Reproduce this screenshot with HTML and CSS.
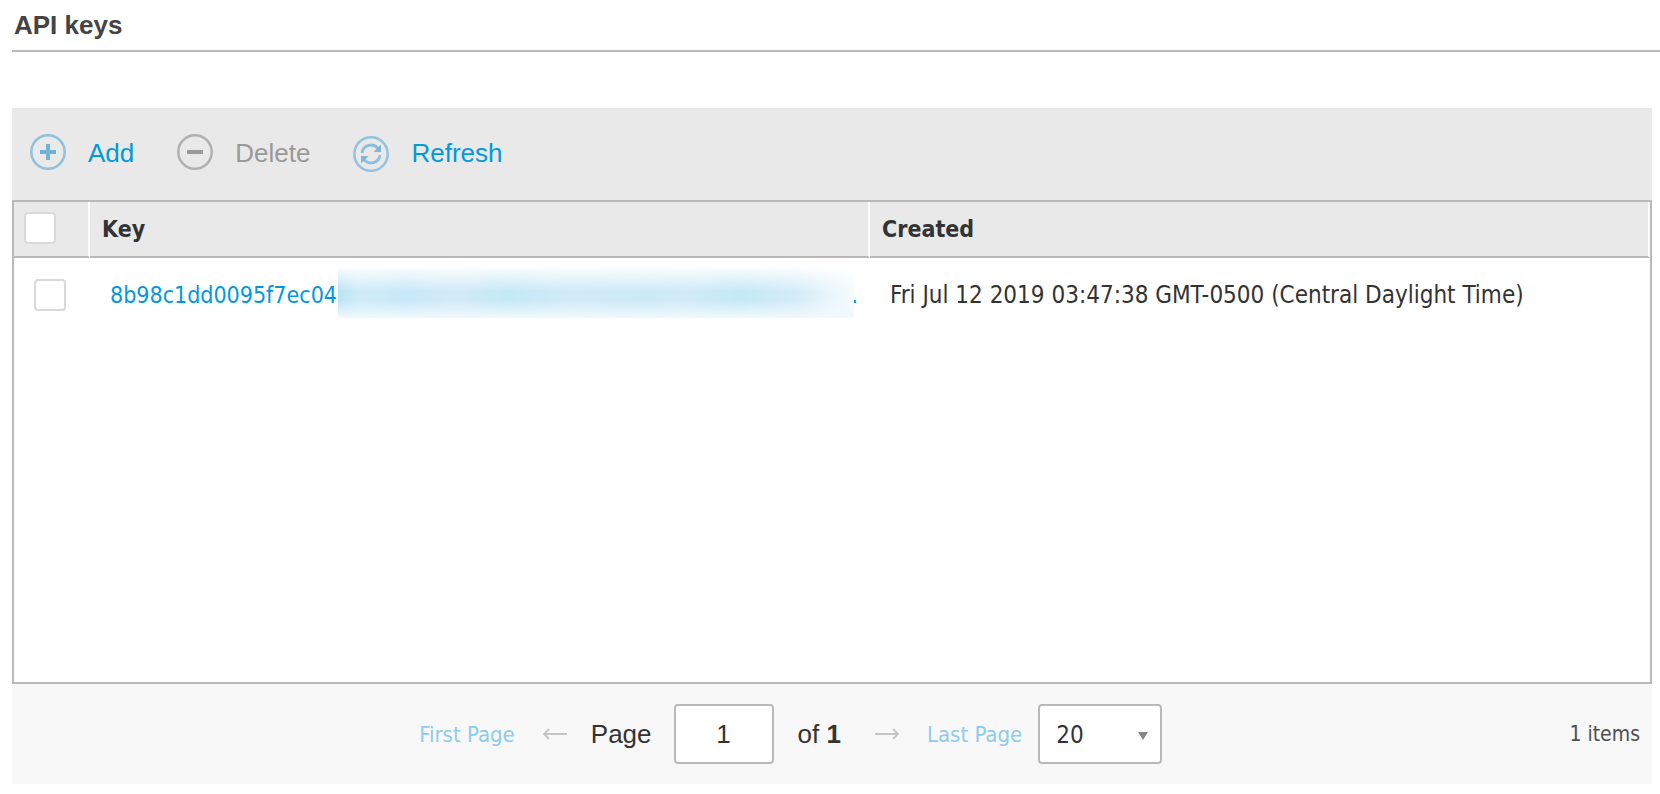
FILE: index.html
```html
<!DOCTYPE html>
<html lang="en">
<head>
  <meta charset="utf-8">
  <title>API keys</title>
  <link rel="stylesheet" href="styles.css">
</head>
<body>
<h1 class="page-title">API keys</h1>

<div class="grid">
  <div class="toolbar">
    <button class="tool-btn" type="button">
      <svg class="tool-icon" viewBox="0 0 36 36" fill="none">
        <circle cx="18" cy="18" r="16.700" stroke="#8fc1de" stroke-width="2.500"/>
        <path d="M10 18H26M18 10V26" stroke="#70b1d8" stroke-width="4"/>
      </svg>
      Add
    </button>
    <button class="tool-btn" type="button" disabled>
      <svg class="tool-icon" viewBox="0 0 36 36" fill="none">
        <circle cx="18" cy="18" r="16.700" stroke="#b0b0b0" stroke-width="2.500"/>
        <path d="M10 18H26" stroke="#9a9a9a" stroke-width="4"/>
      </svg>
      Delete
    </button>
    <button class="tool-btn" type="button">
      <svg class="tool-icon tool-icon-refresh" viewBox="0 0 36 36" fill="none">
        <circle cx="18" cy="18" r="16.700" stroke="#93c3de" stroke-width="2.500"/>
        <path d="M9 17A9 9 0 0 1 25 12.500M27 19A9 9 0 0 1 11 23.500" stroke="#8abfdd" stroke-width="2.800"/>
        <path d="M28 8.500V16H20.500ZM8 27.500V20H15.500Z" fill="#7db8da"/>
      </svg>
      Refresh
    </button>
  </div>

  <div class="grid-body">
    <table class="key-table">
      <thead>
        <tr>
          <th class="col-check"><input class="check" type="checkbox" aria-label="Select all"></th>
          <th>Key</th>
          <th>Created</th>
        </tr>
      </thead>
      <tbody>
        <tr>
          <td class="col-check"><input class="check" type="checkbox" aria-label="Select key"></td>
          <td><a class="key-link" href="#"><span>8b98c1dd0095f7ec048</span><span>.</span><i class="redacted"></i></a></td>
          <td class="col-date">Fri Jul 12 2019 03:47:38 GMT-0500 (Central Daylight Time)</td>
        </tr>
      </tbody>
    </table>
  </div>

  <div class="footer">
    <div class="pager">
      <a class="pager-link" href="#">First Page</a>
      <button class="pager-arrow pager-prev" type="button" aria-label="Previous page">
        <svg width="24" height="12" viewBox="0 0 24 12" fill="none" stroke="#c4c4c4" stroke-width="1.800">
          <path d="M24 6H1M6 1L1 6L6 11"/>
        </svg>
      </button>
      <label class="pager-label" for="page-input">Page</label>
      <input class="pager-input" id="page-input" type="text" value="1">
      <span class="pager-total">of <b>1</b></span>
      <button class="pager-arrow pager-next" type="button" aria-label="Next page">
        <svg width="24" height="12" viewBox="0 0 24 12" fill="none" stroke="#c4c4c4" stroke-width="1.800">
          <path d="M0 6H23M18 1L23 6L18 11"/>
        </svg>
      </button>
      <a class="pager-link" href="#">Last Page</a>
      <div class="page-size">
        <select class="page-size-select" aria-label="Items per page">
          <option>20</option>
        </select>
        <svg class="page-size-arrow" width="10" height="8" viewBox="0 0 10 8"><path d="M0 0H10L5 8Z" fill="#858585"/></svg>
      </div>
    </div>
    <div class="item-count">1 items</div>
  </div>
</div>
</body>
</html>
```
FILE: styles.css
```css
* {
  box-sizing: border-box;
}
body {
  margin: 0;
  padding: 0 0 10px 12px;
  background-color: #fff;
  color: #333;
  font-family: "DejaVu Sans Condensed", "Noto Sans", sans-serif;
  font-size: 23px;
}
.page-title {
  margin: 0 0 56px;
  padding: 10px 0 10px 2px;
  border-bottom: 2px solid #b9b9b9;
  color: #444;
  font: bold 26px/30px "Liberation Sans", Arial, sans-serif;
}
.grid {
  margin-right: 8px;
}

/* toolbar */
.toolbar {
  display: flex;
  gap: 43px;
  padding: 26px 18px 28px;
  background-color: #e9e9e9;
}
.tool-btn {
  display: flex;
  align-items: center;
  gap: 22px;
  height: 38px;
  padding: 0;
  border: 0;
  background: none;
  color: #0099e0;
  font: 26px/38px "Liberation Sans", Arial, sans-serif;
  cursor: pointer;
}
.tool-btn:disabled {
  color: #999;
  cursor: default;
}
.tool-icon {
  width: 36px;
  height: 36px;
  align-self: flex-start;
}
.tool-icon-refresh {
  align-self: flex-end;
}

/* table */
.grid-body {
  min-height: 484px;
  border: 2px solid #b9b9b9;
}
.key-table {
  width: 100%;
  border-collapse: separate;
  border-spacing: 0;
  table-layout: fixed;
}
.key-table th {
  height: 56px;
  padding: 0 12px;
  border-right: 2px solid #fff;
  border-bottom: 2px solid #b9b9b9;
  background-color: #e9e9e9;
  background-clip: padding-box;
  font-weight: bold;
  text-align: left;
}
.key-table td {
  height: 74px;
  padding: 0 0 0 20px;
  white-space: nowrap;
}
.key-table .col-check {
  width: 76px;
}
.key-table th.col-check {
  padding: 0 10px 2px;
}
.key-table .col-date {
  font-size: 24px;
}
.check {
  display: block;
  width: 32px;
  height: 32px;
  margin: 0;
  border: 2px solid #d9d9d9;
  border-radius: 4px;
  background-color: #fff;
  appearance: none;
}
.key-link {
  position: relative;
  display: flex;
  justify-content: space-between;
  margin-right: 12px;
  color: #0099e0;
  text-decoration: none;
}
.redacted {
  position: absolute;
  top: -16px;
  left: 228px;
  right: 4px;
  height: 52px;
  background:
    linear-gradient(to bottom, #fff 0%, rgba(255, 255, 255, .15) 48%, rgba(255, 255, 255, .15) 65%, #f1f9fd 100%),
    linear-gradient(to right, #b0dcf3 0%, #c7e9f6 4%, #bfe4f7 13%, #cbe7f6 23%, #bbe4f4 33%, #c9e8f6 45%, #c3e6f5 60%, #c9e8f6 67%, #bbe4f4 78%, #cee9f7 89%, #f5fbff 100%);
}

/* footer */
.footer {
  display: flex;
  align-items: center;
  height: 100px;
  padding-right: 12px;
  background-color: #f8f8f8;
}
.pager {
  display: flex;
  flex: 1;
  align-items: center;
  justify-content: center;
}
.pager-link {
  color: #8ecbee;
  font-size: 22px;
  text-decoration: none;
}
.pager-arrow {
  display: flex;
  padding: 0;
  border: 0;
  background: none;
}
.pager-prev {
  margin: 0 24px 0 28px;
}
.pager-next {
  margin: 0 28px 0 34px;
}
.pager-label,
.pager-total {
  font: 26px/30px "Liberation Sans", Arial, sans-serif;
}
.pager-label {
  margin-right: 22px;
}
.pager-input,
.page-size-select {
  height: 60px;
  border: 2px solid #b9b9b9;
  border-radius: 4px;
  background-color: #fff;
  color: #333;
}
.pager-input {
  width: 100px;
  padding: 0;
  font: 26px "Liberation Sans", Arial, sans-serif;
  text-align: center;
}
.pager-total {
  margin-left: 24px;
}
.page-size {
  position: relative;
  margin-left: 16px;
}
.page-size-select {
  display: block;
  width: 124px;
  padding: 2px 16px 0;
  font: 24px "DejaVu Sans Condensed", "Noto Sans", sans-serif;
  appearance: none;
}
.page-size-arrow {
  position: absolute;
  top: 28px;
  right: 14px;
  pointer-events: none;
}
.item-count {
  color: #4f4f4f;
  font-size: 21px;
}
```
